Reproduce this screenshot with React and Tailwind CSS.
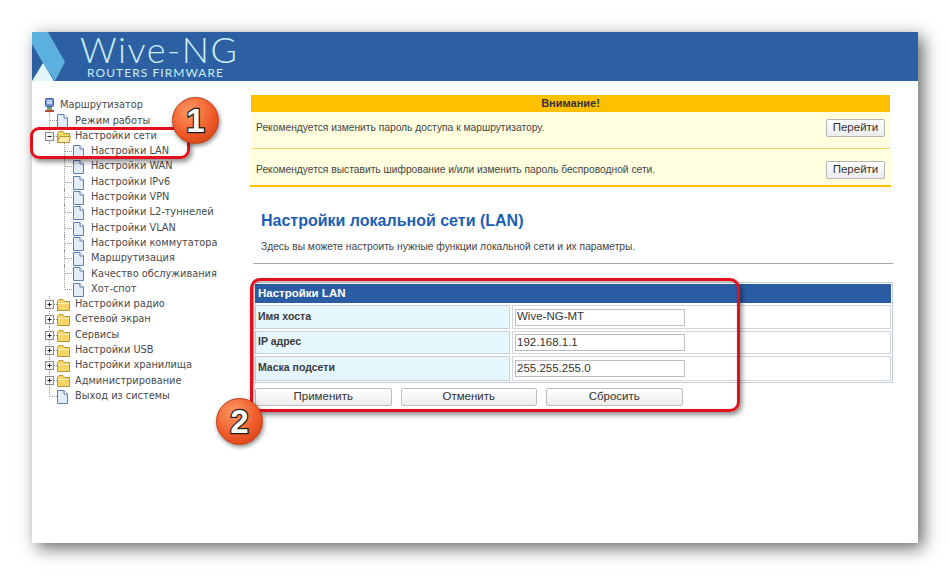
import React from "react";

const treeItems = [
  { level: 1, type: "file", label: "Режим работы" },
  { level: 1, type: "open", label: "Настройки сети" },
  { level: 2, label: "Настройки LAN" },
  { level: 2, label: "Настройки WAN" },
  { level: 2, label: "Настройки IPv6" },
  { level: 2, label: "Настройки VPN" },
  { level: 2, label: "Настройки L2-туннелей" },
  { level: 2, label: "Настройки VLAN" },
  { level: 2, label: "Настройки коммутатора" },
  { level: 2, label: "Маршрутизация" },
  { level: 2, label: "Качество обслуживания" },
  { level: 2, label: "Хот-спот", last: true },
  { level: 1, type: "closed", label: "Настройки радио" },
  { level: 1, type: "closed", label: "Сетевой экран" },
  { level: 1, type: "closed", label: "Сервисы" },
  { level: 1, type: "closed", label: "Настройки USB" },
  { level: 1, type: "closed", label: "Настройки хранилища" },
  { level: 1, type: "closed", label: "Администрирование" },
  { level: 1, type: "file", label: "Выход из системы", last: true },
];

const fields = [
  { label: "Имя хоста", value: "Wive-NG-MT", height: "h-[24px]" },
  { label: "IP адрес", value: "192.168.1.1", height: "h-[23px]" },
  { label: "Маска подсети", value: "255.255.255.0", height: "h-[25px]" },
];

const dots = { stroke: "#9a9a9a", strokeWidth: 1, strokeDasharray: "1 1" };

// x values in these drawings are counted from the left of the tree (44px on the page)
const FileIcon = ({ x }) => (
  <g transform={`translate(${x} 1)`}>
    <path d="M0.5 0.5H7L10.5 4V13.5H0.5Z" fill="#e3edfa" stroke="#5f7fae" />
    <path d="M7 0.5V4H10.5" fill="#fff" stroke="#5f7fae" />
  </g>
);

const FolderIcon = ({ x, open }) => (
  <g transform={`translate(${x} 2)`}>
    <path d="M0.5 2.5L2 0.5H6L7.5 2.5H12.5V11.5H0.5Z" fill="#f6d566" stroke="#b5963a" />
    {open ? (
      <path d="M0.5 11.5L2.5 5.5H13.5L12 11.5Z" fill="#fbeaa6" stroke="#b5963a" />
    ) : (
      <path d="M1 4.5H12" stroke="#fdf0b8" />
    )}
  </g>
);

const TreeIcon = ({ item }) => {
  if (item.level === 2) {
    return (
      <svg width="47" height="15" className="shrink-0 overflow-visible">
        <path d={item.last ? "M20.5 -1V7.5" : "M20.5 -1V16"} {...dots} />
        <path d="M21 7.5H29" {...dots} />
        <FileIcon x={29} />
      </svg>
    );
  }
  return (
    <svg width="31" height="15" className="shrink-0 overflow-visible">
      {item.type === "file" ? (
        <>
          <path d={item.last ? "M5.5 -1V7.5" : "M5.5 -1V16"} {...dots} />
          <path d="M6 7.5H13" {...dots} />
          <FileIcon x={13} />
        </>
      ) : (
        <>
          <path d="M5.5 -1V3M5.5 12V16" {...dots} />
          <path d="M10 7.5H13" {...dots} />
          <rect x="1.5" y="3.5" width="8" height="8" fill="#f4f4f4" stroke="#8c8c8c" />
          <path d={item.type === "open" ? "M3.5 7.5H7.5" : "M3.5 7.5H7.5M5.5 5.5V9.5"} stroke="#222" />
          <FolderIcon x={13} open={item.type === "open"} />
        </>
      )}
    </svg>
  );
};

const Sidebar = () => (
  <div className="w-[219px] shrink-0 pl-[12px] pt-[17px] font-['DejaVu_Sans',sans-serif] text-[9.8px] text-[#4a4a4a]">
    <div className="flex h-[15.3px] items-center">
      <svg width="16" height="15" className="shrink-0 overflow-visible">
        <rect x="1.5" y="0.5" width="8" height="8" rx="1" fill="#6f93d6" stroke="#3f5f9e" />
        <rect x="3" y="2" width="5" height="4" fill="#b9d2f2" />
        <rect x="3" y="9" width="5" height="3" fill="#7aa06e" />
        <rect x="1" y="12" width="9" height="2" fill="#c24a3a" />
      </svg>
      <span>Маршрутизатор</span>
    </div>
    {treeItems.map((item) => (
      <div key={item.label} className="flex h-[15.3px] items-center whitespace-nowrap">
        <TreeIcon item={item} />
        <span>{item.label}</span>
      </div>
    ))}
  </div>
);

const GoButton = () => (
  <button className="h-[18px] w-[59px] shrink-0 rounded-[2px] border border-[#b5b5b5] bg-gradient-to-b from-white to-[#ececec] text-[11.5px] leading-none text-[#333]">
    Перейти
  </button>
);

const Warnings = () => (
  <div className="w-[639px] text-[10.25px] text-[#444]">
    <div className="flex h-[17px] items-center justify-center bg-[#ffc000] text-[11px] font-bold text-[#333]">
      Внимание!
    </div>
    <div className="flex h-[37px] items-center justify-between border-b border-[#ffd766] bg-[#ffffe0] pb-[4px] pl-[5px] pr-[5px]">
      <span>Рекомендуется изменить пароль доступа к маршрутизатору.</span>
      <GoButton />
    </div>
    <div className="-ml-px -mr-px flex h-[38px] items-center justify-between border-b-2 border-[#ffc000] bg-[#ffffe0] pl-[6px] pr-[6px] pt-[5px]">
      <span>Рекомендуется выставить шифрование и/или изменить пароль беспроводной сети.</span>
      <GoButton />
    </div>
  </div>
);

const LanTable = () => (
  <div className="mt-[18px] ml-[2px]">
    <div className="flex h-[101px] w-[640px] flex-col gap-[2px] border border-[#c4ccd4] p-[1px]">
      <div className="flex h-[19px] items-center bg-[#2a5ca3] pl-[3px] pt-[1px] text-[11.5px] font-bold text-white">
        Настройки LAN
      </div>
      {fields.map((f) => (
        <div key={f.label} className={`grid grid-cols-[255px_1fr] gap-x-[2px] ${f.height}`}>
          <div className="flex items-center border border-[#c4d0da] bg-[#e6f6fd] pb-[1px] pl-[2px] text-[10.5px] font-bold text-[#3a3a3a]">
            {f.label}
          </div>
          <div className="flex items-center border border-[#d0d6dc] pl-[2px]">
            <input
              readOnly
              value={f.value}
              className="h-[17px] w-[170px] border border-[#bdbdbd] bg-white pl-px text-[11.5px] text-[#333] outline-none"
            />
          </div>
        </div>
      ))}
    </div>
    <div className="mt-[5px] flex gap-[9px] pl-[2px]">
      {["Применить", "Отменить", "Сбросить"].map((b) => (
        <button
          key={b}
          className="h-[18px] w-[136.5px] rounded-[2px] border border-[#bdbdbd] bg-gradient-to-b from-white to-[#ececec] text-[11.5px] leading-none text-[#333]"
        >
          {b}
        </button>
      ))}
    </div>
  </div>
);

const Badge = ({ className, children }) => (
  <div
    className={`absolute flex h-[47px] w-[47px] items-center justify-center rounded-full border border-[#b8380f] bg-[radial-gradient(circle_at_38%_30%,#ff9a66,#ee5a28_55%,#c93a12)] shadow-[1px_2px_4px_rgba(0,0,0,0.45)] ${className}`}
  >
    <span className="pb-px text-[33px] font-bold leading-none text-white [-webkit-text-stroke:2.5px_#1a1a1a] [paint-order:stroke]">
      {children}
    </span>
  </div>
);

const App = () => (
  <div className="relative h-[575px] w-[950px] overflow-hidden bg-white px-[32px] pt-[32px] font-['Liberation_Sans',Arial,sans-serif]">
    <div className="h-[511px] w-[886px] bg-white shadow-[5px_5px_16px_rgba(0,0,0,0.6)]">
      <header className="flex h-[49px] bg-[#2d5fa3]">
        <svg width="34" height="49" className="shrink-0">
          <path d="M0 0H16L33 30L23 49L11 31L0 12Z" fill="#5cb0dd" />
          <path d="M0 49L11 31L22 49Z" fill="#e2f5fb" />
        </svg>
        <div className="ml-[14px] flex flex-col font-['Lato',sans-serif] text-[#c9eef7]">
          <span className="h-[35px] text-[36px] font-light leading-[34px] tracking-[1.5px]">Wive-NG</span>
          <span className="ml-[7px] text-[12px] leading-[12px] tracking-[1.05px]">ROUTERS FIRMWARE</span>
        </div>
      </header>
      <div className="flex">
        <Sidebar />
        <main className="flex-1 pt-[14px]">
          <Warnings />
          <h2 className="ml-[10px] mt-[24px] text-[16px] font-bold leading-[20px] text-[#1b5fb5]">
            Настройки локальной сети (LAN)
          </h2>
          <p className="ml-[10px] mt-[9px] text-[10.25px] leading-[14px] text-[#444]">
            Здесь вы можете настроить нужные функции локальной сети и их параметры.
          </p>
          <div className="ml-[2px] mt-[9px] h-px w-[640px] bg-[#a9a9a9]" />
          <LanTable />
        </main>
      </div>
    </div>

    {/* annotations on top of the screenshot */}
    <div className="absolute left-[30px] top-[127px] h-[32px] w-[160px] rounded-[9px] border-[3px] border-[#e2101c] shadow-[2px_3px_5px_rgba(0,0,0,0.45)]" />
    <div className="absolute left-[250px] top-[278px] h-[134px] w-[490px] rounded-[10px] border-[3px] border-[#e2101c] shadow-[2px_3px_5px_rgba(0,0,0,0.45),inset_1px_1px_3px_rgba(0,0,0,0.35)]" />
    <Badge className="left-[172px] top-[97px]">1</Badge>
    <Badge className="left-[216px] top-[398px]">2</Badge>
  </div>
);

export default App;
